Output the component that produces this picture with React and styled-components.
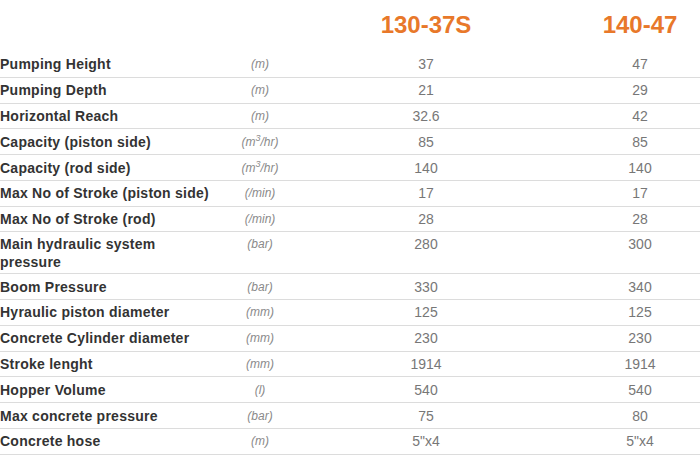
import React from 'react';
import styled, { createGlobalStyle } from 'styled-components';

const specs = [
  { label: 'Pumping Height', unit: '(m)', a: '37', b: '47' },
  { label: 'Pumping Depth', unit: '(m)', a: '21', b: '29' },
  { label: 'Horizontal Reach', unit: '(m)', a: '32.6', b: '42' },
  { label: 'Capacity (piston side)', unit: 'm3', a: '85', b: '85' },
  { label: 'Capacity (rod side)', unit: 'm3', a: '140', b: '140' },
  { label: 'Max No of Stroke (piston side)', unit: '(/min)', a: '17', b: '17' },
  { label: 'Max No of Stroke (rod)', unit: '(/min)', a: '28', b: '28' },
  { label: 'Main hydraulic system pressure', unit: '(bar)', a: '280', b: '300', tall: true },
  { label: 'Boom Pressure', unit: '(bar)', a: '330', b: '340' },
  { label: 'Hyraulic piston diameter', unit: '(mm)', a: '125', b: '125' },
  { label: 'Concrete Cylinder diameter', unit: '(mm)', a: '230', b: '230' },
  { label: 'Stroke lenght', unit: '(mm)', a: '1914', b: '1914' },
  { label: 'Hopper Volume', unit: '(l)', a: '540', b: '540' },
  { label: 'Max concrete pressure', unit: '(bar)', a: '75', b: '80' },
  { label: 'Concrete hose', unit: '(m)', a: '5"x4', b: '5"x4' },
];

const GlobalStyle = createGlobalStyle`
  html, body {
    margin: 0;
    padding: 0;
    background: #fff;
    overflow: hidden;
  }
  body {
    font-family: "Liberation Sans", Arial, sans-serif;
  }
`;

const Table = styled.div`
  width: 733px;
  display: flex;
  flex-direction: column;
`;

const Header = styled.div`
  display: grid;
  grid-template-columns: 215px 90px 242px 186px;
  height: 52px;
  align-items: start;
`;

const Model = styled.div`
  grid-column: ${(p) => p.col};
  text-align: center;
  color: #e8782a;
  font-weight: bold;
  font-size: 24px;
  line-height: 24px;
  padding-top: 13px;
`;

const Row = styled.div`
  display: grid;
  grid-template-columns: 215px 90px 242px 186px;
  align-items: ${(p) => (p.tall ? 'start' : 'center')};
  min-height: 20px;
  padding: 2.4px 0;
  border-bottom: 1px solid #dcdcdc;
  line-height: 18px;
`;

const Label = styled.div`
  font-weight: bold;
  font-size: 14px;
  letter-spacing: 0.25px;
  color: #333;
  white-space: ${(p) => (p.tall ? 'normal' : 'nowrap')};
  padding-right: ${(p) => (p.tall ? '40px' : '0')};
`;

const Unit = styled.div`
  text-align: center;
  font-style: italic;
  font-size: 12px;
  color: #8a8a8a;

  sup {
    font-size: 9px;
    line-height: 0;
  }
`;

const Value = styled.div`
  text-align: center;
  font-size: 14px;
  color: #777;
`;

const renderUnit = (unit) =>
  unit === 'm3' ? (
    <>
      (m<sup>3</sup>/hr)
    </>
  ) : (
    unit
  );

const App = () => (
  <>
    <GlobalStyle />
    <Table>
      <Header>
        <Model col={3}>130-37S</Model>
        <Model col={4}>140-47</Model>
      </Header>
      {specs.map((s) => (
        <Row key={s.label} tall={s.tall}>
          <Label tall={s.tall}>{s.label}</Label>
          <Unit>{renderUnit(s.unit)}</Unit>
          <Value>{s.a}</Value>
          <Value>{s.b}</Value>
        </Row>
      ))}
    </Table>
  </>
);

export default App;
